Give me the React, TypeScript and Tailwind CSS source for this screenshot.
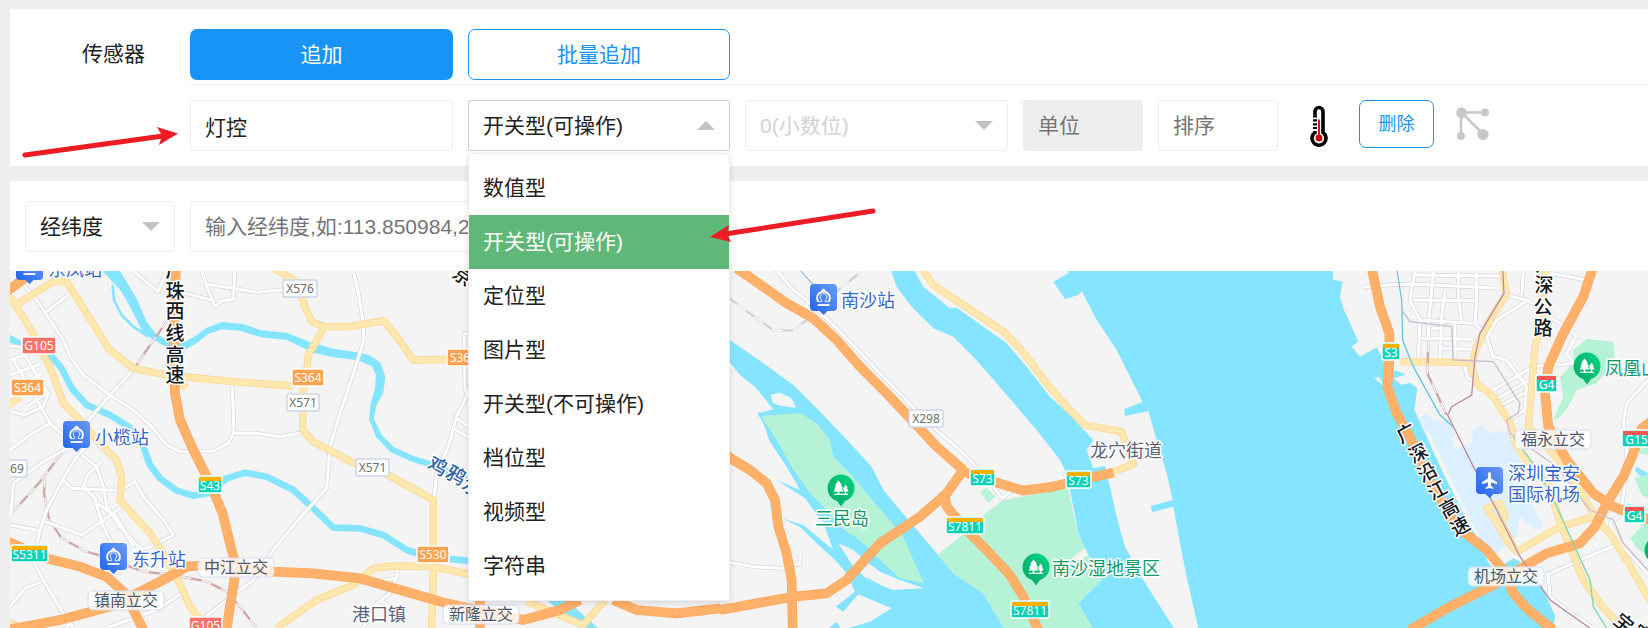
import React from "react";

const sensorTypes = [
  "数值型",
  "开关型(可操作)",
  "定位型",
  "图片型",
  "开关型(不可操作)",
  "档位型",
  "视频型",
  "字符串",
];

const field = "h-[51px] rounded-[3px] border border-[#eeeeee] bg-white px-[14px] text-[21px]";

/* ---------- form pieces ---------- */

function Caret({ up = false }: { up?: boolean }) {
  return (
    <svg
      className="pointer-events-none absolute top-1/2 right-[15px] -mt-[5px] h-[9px] w-[18px]"
      viewBox="0 0 18 9"
      aria-hidden="true"
    >
      <path d={up ? "M0 9 9 0 18 9Z" : "M0 0 9 9 18 0Z"} fill="#c2c2c2" />
    </svg>
  );
}

function Thermometer() {
  return (
    <svg viewBox="0 0 18 42" className="h-[42px] w-[18px]" aria-hidden="true">
      <path
        d="M5 27.5V6.5a4 4 0 0 1 8 0v21a7 7 0 1 1-8 0Z"
        fill="#fff"
        stroke="#000"
        strokeWidth="3.6"
      />
      <path d="M2 10h5v16H2Z" fill="#fff" />
      <path d="M3 11.3h4M3 15.3h4M3 19.3h4M3 23h4" stroke="#000" strokeWidth="2.2" />
      <path d="M9 14.5v17" stroke="#c80000" strokeWidth="1.8" />
      <circle cx="9" cy="33" r="3.4" fill="#c80000" />
    </svg>
  );
}

function NodesIcon() {
  return (
    <svg viewBox="0 0 34 34" className="size-[34px]" aria-hidden="true">
      <path d="M5.5 5.5H29M5 5.5V29M5.500 5.500 27 27" stroke="#c8c8c8" strokeWidth="2.5" />
      <g fill="#c8c8c8">
        <circle cx="5.5" cy="5.5" r="5.3" />
        <circle cx="29" cy="5.5" r="4" />
        <circle cx="5" cy="29" r="4" />
        <circle cx="27" cy="27.5" r="5.6" />
      </g>
    </svg>
  );
}

/* ---------- map pieces ---------- */

type Style = { color: string; edge: string; width: number };
const minor: Style = { color: "#ffffff", edge: "#d3d5dd", width: 9 };
const main: Style = { color: "#ffe8b0", edge: "#ffd48c", width: 18 };
const highway: Style = { color: "#ffb069", edge: "#ffa860", width: 25 };

function Roads({ lines, look }: { lines: string[]; look: Style }) {
  return (
    <g fill="none" strokeLinejoin="round">
      {lines.map((p) => (
        <polyline key={"e" + p} points={p} stroke={look.edge} strokeWidth={look.width + 4} />
      ))}
      {lines.map((p) => (
        <polyline key={p} points={p} stroke={look.color} strokeWidth={look.width} />
      ))}
    </g>
  );
}

function Rail({ points, color = "#cfa6a8" }: { points: string; color?: string }) {
  return (
    <g fill="none" strokeLinejoin="round">
      <polyline points={points} stroke={color} strokeWidth="7" />
      <polyline points={points} stroke="#fff" strokeWidth="4" strokeDasharray="32 32" />
    </g>
  );
}

const westMinor = [
  "70,72 110,120 140,165 190,240 210,290 250,345 330,405 400,450 450,495 500,555 540,575 640,573 685,550 700,520 770,520 840,530 905,518",
  "697,380 702,520",
  "1060,33 1075,100 1090,190 1092,240 1060,340 1020,460 990,560 980,685 890,785 820,870 760,960 700,1005 610,1075",
  "400,33 475,95 497,40",
  "605,33 625,90 645,140 665,122 700,118 705,33",
  "615,72 700,85 770,97 850,90",
  "550,98 640,122",
  "140,155 205,105",
  "408,320 330,405 262,485",
  "30,258 75,262",
  "30,300 75,285 110,345 145,400 130,440 75,465 35,455",
  "40,300 100,400 150,490 195,530",
  "30,345 120,312",
  "45,385 125,340",
  "80,440 140,400",
  "30,570 90,525 150,490",
  "40,670 130,605 210,560",
  "40,670 35,740 30,770",
  "270,545 230,590 190,655 140,750 120,810 112,850",
  "245,585 290,620 310,680 320,740 360,800 420,865",
  "290,720 250,680 262,645 305,605",
  "190,660 215,685 310,690 360,690 405,665 430,710 490,780 520,825 440,865 395,870",
  "285,720 310,800 335,850",
  "135,785 245,825 360,745",
  "30,795 120,812",
  "290,730 350,770 400,860",
  "100,905 130,960 170,1030 200,1075 220,1104",
  "30,1040 75,985 125,965",
  "330,1100 470,1050 545,1000",
  "1420,220 1392,222 1395,390 1404,400 1370,470 1345,560 1310,640 1302,715",
  "1370,475 1420,510",
  "1360,505 1420,540",
  "1080,970 1190,955 1192,930",
  "1190,950 1170,1000 1130,1030 1115,1060 1090,1104",
  "1140,1020 1200,1060",
  "170,1060 210,1075 200,1104",
];
const westMain = [
  "40,140 160,65 200,65 235,120 285,200 325,265 400,325 500,345 700,365 880,378",
  "30,110 75,180 110,240 160,345 190,430 240,480 300,550 350,600 365,650 360,720 400,765 450,820 490,880 530,950 570,1040 600,1080",
  "820,25 890,65 915,140 935,185 970,200 1050,200 1150,182 1190,230 1240,300 1420,297",
  "970,205 925,285 920,330 908,400 908,510 940,545 1060,608 1165,645 1300,720 1300,930 1295,1104",
  "830,1104 950,1020 1060,975 1120,925 1180,918 1300,920 1440,950",
  "20,440 60,410",
  "20,1080 60,1104",
  "1580,1025 1750,1095 1815,1020",
  "535,360 560,385",
];
const westHighway = [
  "528,25 525,100 522,200 522,330 525,400 540,480 580,570 630,670 668,760 690,850 708,920 700,980 690,1040 680,1110",
  "20,843 140,895 240,920 320,950 375,1000 430,1110",
  "20,1110 180,1080 330,1040 400,1005 480,965 560,920 620,915 820,935 940,940 1080,955 1200,990 1340,1030 1570,1080 1680,1050 1740,1020",
  "20,95 80,50",
  "1440,1020 1440,1110",
  "1840,1020 1910,1050 2030,1060 2160,1045",
];

const centerMinor = [
  "165,25 215,85 265,125 320,175 400,255 470,330 540,400 600,465 660,520 720,570 770,622",
  "820,680 845,715 900,675",
  "265,125 255,150",
  "20,905 100,920 180,925 240,910 240,885",
];
const centerMain = [
  "605,25 640,75 700,115 760,155 850,215 900,265 980,370 1040,440 1095,495 1205,515 1240,612 1175,638",
];
const centerHighway = [
  "50,25 130,80 200,130 280,175 350,240 420,320 500,400 580,485 650,560 730,630",
  "730,630 680,700 600,770 480,850 380,960 320,1000 220,1010 0,1050",
  "730,635 820,665 910,692 1000,680 1100,655 1180,638",
  "672,700 680,740 740,810 800,870 870,945 910,1010 955,1110",
  "0,570 40,600 90,630 140,670 165,720 175,800 200,880 215,960 218,1110",
];

const eastMinor = [
  "550,82 620,75 700,72 960,85",
  "705,33 690,120 720,180 715,295",
  "760,33 755,90 745,200 745,240",
  "835,33 835,110 845,190",
  "700,45 960,48",
  "700,120 890,122",
  "715,180 880,190",
  "890,40 890,120 885,190 920,230 940,290 980,300",
  "715,235 880,238",
  "795,90 785,170 780,295",
  "825,190 825,295",
  "780,265 880,268",
  "755,205 780,205",
  "980,300 1040,380 1035,460",
  "930,395 1060,320 1130,310",
  "945,420 1040,365",
  "965,435 1050,390",
  "1045,120 950,180 920,230",
  "960,100 1045,122 1110,170 1190,225 1160,280 1180,310 1130,315",
  "1030,33 1025,110",
  "1110,40 1220,60",
  "855,315 860,350 890,370",
  "1100,945 1200,900 1320,850 1420,960",
  "1320,850 1290,790 1320,765",
  "1105,945 1110,1010 1160,1050 1240,1104",
  "1420,350 1395,370 1340,430 1330,490 1340,560 1340,640 1325,740",
  "985,480 1035,450",
];
const eastMain = [
  "965,25 980,100 930,180 890,260 875,320 890,370 940,410 990,490 1010,560 1040,600 1110,680 1140,790 1170,860 1210,960 1260,1030 1330,1110",
  "660,305 870,308",
  "1095,25 1090,180 1065,260 1055,380 1045,500 1100,560 1170,640 1240,760",
  "1240,770 1140,800 1010,875 980,840 940,770 920,745 960,730 975,770 960,780 1005,870",
  "1240,770 1290,820 1340,900 1420,1040",
];
const eastHighway = [
  "575,25 600,140 628,220 628,300 622,380 650,460 700,550 760,680 830,800 920,870 970,930 1000,1000 1040,1045 1120,1110",
  "690,1110 800,1045 940,975 1040,915 1100,880 1200,850 1245,800 1280,730 1330,650 1360,580 1385,505 1420,480",
  "1238,25 1210,110 1150,220 1105,320 1095,400 1105,500 1160,600 1240,700 1300,740 1420,785",
];

type ShieldKind = "province" | "nation" | "S" | "G" | "X";
const shieldFill: Record<ShieldKind, string> = {
  province: "#0bd3b8",
  nation: "#0bd3b8",
  S: "#ffa24f",
  G: "#ff7168",
  X: "#ffffff",
};

function Shield({ x, y, w, kind, text }: { x: number; y: number; w: number; kind: ShieldKind; text: string }) {
  const strip = kind === "province" ? "#ffb000" : kind === "nation" ? "#ff5555" : null;
  return (
    <g>
      <rect
        x={x}
        y={y}
        width={w}
        height={17}
        rx={2}
        fill={shieldFill[kind]}
        stroke={kind === "X" ? "#cdd5e6" : "#fff"}
        strokeWidth="1.5"
      />
      {strip && <rect x={x + 1} y={y + 1} width={w - 2} height={4} fill={strip} />}
      <text
        x={x + w / 2}
        y={y + (strip ? 14 : 13)}
        textAnchor="middle"
        fontSize="12"
        fill={kind === "X" ? "#6e6e6e" : "#fff"}
      >
        {text}
      </text>
    </g>
  );
}

function Junction({ x, y, text }: { x: number; y: number; text: string }) {
  return (
    <g>
      <rect x={x} y={y} width={76} height={19} rx={5} fill="#fff" fillOpacity="0.8" stroke="#d5dcec" />
      <text x={x + 38} y={y + 15} textAnchor="middle" fontSize="16" fill="#4c566e">
        {text}
      </text>
    </g>
  );
}

function Name({ x, y, text, fill }: { x: number; y: number; text: string; fill: string }) {
  return (
    <text x={x} y={y} fontSize="18" fill={fill} stroke="#fff" strokeWidth="3" strokeLinejoin="round" paintOrder="stroke">
      {text}
    </text>
  );
}

function RoadName({ chars, angle = 0, fill = "#15181d" }: { chars: [string, number, number][]; angle?: number; fill?: string }) {
  return (
    <g fontSize="19" fontWeight="500" fill={fill} stroke="#fff" strokeWidth="3" strokeLinejoin="round" paintOrder="stroke" textAnchor="middle">
      {chars.map(([c, x, y]) => (
        <text key={c + y} transform={`translate(${x} ${y}) rotate(${angle})`} y={7}>
          {c}
        </text>
      ))}
    </g>
  );
}

function BluePin({ x, y, plane = false }: { x: number; y: number; plane?: boolean }) {
  return (
    <g transform={`translate(${x} ${y})`}>
      <path
        d="M4 0h19a4 4 0 0 1 4 4v19a4 4 0 0 1-4 4h-5.5L13.5 31 9.5 27H4a4 4 0 0 1-4-4V4a4 4 0 0 1 4-4Z"
        fill="url(#pinBlue)"
      />
      {plane ? (
        <path
          d="M13.500 5c1 0 1.500 1.500 1.500 3v3.200l6 4v2l-6-2v3.600l2.300 1.900v1.300l-3.800-1-3.800 1v-1.300l2.300-1.900v-3.600l-6 2v-2l6-4V8c0-1.500.5-3 1.500-3Z"
          fill="#fff"
        />
      ) : (
        <g fill="none" stroke="#fff">
          <path d="M8.300 17.600A6.300 6.300 0 1 1 18.700 17.600" strokeWidth="2" />
          <path d="M8.500 17.600h3.300c.3-1.200-.6-2-1-2.800a3.200 3.200 0 1 1 5.400 0c-.4.8-1.300 1.600-1 2.800h3.300" strokeWidth="1.100" strokeOpacity="0.700" />
          <path d="M7.500 21h12" strokeWidth="1.800" />
          <path d="M11.500 6.800 13.500 4.800 15.500 6.800Z" fill="#fff" strokeWidth="1" />
        </g>
      )}
    </g>
  );
}

function ParkPin({ x, y }: { x: number; y: number }) {
  return (
    <g transform={`translate(${x} ${y})`}>
      <path d="M0 18.500-4 13A13.500 13.500 0 1 1 4 13Z" fill="url(#pinGreen)" />
      <path d="M-2.500-7.500 1-3H0l2 3.500H.8L2.500 3.500H-1.700V6h-1.600V3.500h-4.200L-5.500.5h-1.300L-4.800-3h-1.100Z" fill="#fff" />
      <path d="M4.500-3.500 6.800 0H6l1.500 3.500H5.200V6H3.800V3.500H3L2.200.5Z" fill="#fff" />
      <path d="M-7 6.300H7" stroke="#fff" strokeWidth="1.200" />
    </g>
  );
}

function MapView() {
  const blue = "#3467cf";
  const green = "#0a9c68";
  return (
    <svg
      className="absolute inset-0 size-full"
      viewBox="10 271 1638 357"
      preserveAspectRatio="xMinYMin slice"
      fontFamily="'Noto Sans','Noto Sans CJK SC',sans-serif"
      role="img"
      aria-label="地图"
    >
      <defs>
        <linearGradient id="pinBlue" x1="1" y1="0" x2="0" y2="1">
          <stop offset="0" stopColor="#6a9bf8" />
          <stop offset="1" stopColor="#1d62ee" />
        </linearGradient>
        <linearGradient id="pinGreen" x1="1" y1="0" x2="0" y2="1">
          <stop offset="0" stopColor="#00d680" />
          <stop offset="1" stopColor="#0aa565" />
        </linearGradient>
      </defs>
      <rect x="10" y="271" width="1638" height="357" fill="#f4f4f4" />

      {/* rivers and the bay */}
      <g transform="translate(0 260) scale(.33333)">
        <path d="M300 25H355L380 65 412 120 440 185 465 218 500 240 555 245 580 232 620 203 665 186 730 192 780 210 860 218 930 246 1000 266 1070 277 1110 286 1142 308 1156 350 1150 400 1130 435 1121 475 1145 525 1180 560 1240 588 1300 605 1430 660V680L1300 625 1235 605 1170 575 1128 530 1107 478 1112 430 1125 385 1128 345 1115 318 1070 300 1000 292 940 278 860 240 780 232 720 212 665 208 625 222 590 250 550 272 500 262 455 236 425 210 400 160 365 95Z" fill="#85e4ff" />
        <path d="M725 222 780 233" stroke="#f4f4f4" strokeWidth="6" />
        <path d="M338 75 342 120 365 165 400 200 445 230" fill="none" stroke="#85e4ff" strokeWidth="8" />
        <polyline points="20,230 60,252 150,285 185,325 215,385 260,435 330,465 385,500 430,560 450,615 480,655 530,692 580,707 625,700 680,655 735,638 800,650 880,690 940,745 1000,803 1080,805 1150,825 1220,870 1280,890 1430,905" fill="none" stroke="#85e4ff" strokeWidth="20" strokeLinejoin="round" />
        <path d="M1640 1020H1700L1800 1110H1750Z" fill="#85e4ff" />
      </g>
      <g transform="translate(720 260) scale(.33333)">
        <path d="M510 25 530 80 575 140 640 205 700 230 760 290 830 370 890 440 950 510 1020 600 1040 640 1050 690 1075 820 1095 865 1145 960 1075 1030 1120 1110H2530V25Z" fill="#85e4ff" />
        <path d="M0 220 30 240 130 310 220 375 310 465 400 560 455 620 490 690 565 780 655 885 700 940 790 1000 855 1110H320L350 1085 365 1110 450 1085 515 1045 415 1003 370 1055 347 1040 405 995 380 940 345 900 290 850 240 800 185 775 250 795 340 870 310 790 255 715 170 660 240 690 200 620 150 545 130 490 112 460 160 448 105 380 60 345 0 270Z" fill="#85e4ff" />
        <path d="M125 467 240 460 290 490 330 540 340 590 390 640 440 700 500 770 550 830 580 900 612 970 540 955 480 900 430 850 360 800 310 740 270 700 215 620 170 540 130 480Z" fill="#b6f2d6" />
        <path d="M152 405 180 398 215 415 228 443 180 437 158 428ZM355 850 400 870 440 905 480 935 540 960 612 985 520 990 450 965 400 920Z" fill="#f4f4f4" />
        <path d="M395 825 420 850 450 870 475 902" fill="none" stroke="#85e4ff" strokeWidth="7" />
        <path d="M440 955 495 985" fill="none" stroke="#85e4ff" strokeWidth="5" />
        <path d="M652 885 720 830 790 765 850 720 1045 685 1060 760 1075 820 1095 865 1055 895 1080 903 1105 885 1145 960 1075 1030 1120 1110H855L790 1000 700 940ZM780 695 800 683 825 710 805 730Z" fill="#b6f2d6" />
        <path d="M580 25 610 80 690 145 710 143 755 175 860 250 920 320 990 410 1050 465 1120 540 1100 570 1120 625 1155 618 1170 680 1190 770 1215 860 1270 960 1365 1110H1436L1400 950 1380 850 1360 740 1297 756 1292 738 1358 720 1340 640 1310 540 1285 453 1215 468 1212 448 1268 426 1230 350 1190 270 1130 180 1085 93 1075 105 1035 117 1000 65 1045 40V25Z" fill="#f4f4f4" />
      </g>
      <g transform="translate(1180 260) scale(.33333)">
        <path d="M459 25V60L488 65 480 110 492 150 515 200 535 245 515 260 540 290 590 262 610 300 640 335 675 345 640 355 665 375 690 368 712 385 703 450 735 520 790 640 850 760 890 830 940 850 920 900 950 940 1075 960 1125 1065 1120 1110H1420V25Z" fill="#f4f4f4" />
        <path d="M459 62H470L474 120 480 172 468 140ZM975 910 1000 895 1020 905 1010 930 980 930ZM640 330 675 342 640 352ZM1370 620 1404 640 1395 660 1365 632Z" fill="#85e4ff" />
        <path d="M583 355 597 350 612 378Z" fill="#f4f4f4" />
        <path d="M720 470 740 462 765 485 800 480 820 500V570L880 545 875 510 910 495 930 520 985 510 1000 560 1030 620 1060 740 1090 800 1065 810 1020 770 1010 830 940 890 915 850 890 820 850 740 790 610 720 490Z" fill="#dcf0ff" />
        <path d="M738 510 885 815" stroke="#f4f4f4" strokeWidth="9" />
        <path d="M1180 270 1220 237 1300 245 1305 300 1250 370 1190 390 1165 440 1135 475 1120 480 1150 410 1140 350 1180 310ZM1370 570 1420 555V585L1380 582ZM1365 655 1420 640V720L1385 705ZM1340 730 1385 740 1420 780V890L1375 870 1350 835 1385 800Z" fill="#b6f2d6" />
      </g>

      {/* roads */}
      <g transform="translate(0 260) scale(.33333)">
        <Rail points="505,178 440,270 405,322" />
        <Rail points="40,755 120,665 185,580" />
        <Rail points="135,650 132,700 148,780 185,835 260,875 310,890 430,935 520,945 620,965 680,995 720,1040 770,1104" />
        <Roads lines={westMinor} look={minor} />
        <Roads lines={westMain} look={main} />
        <Roads lines={westHighway} look={highway} />
      </g>
      <g transform="translate(720 260) scale(.33333)">
        <Rail points="0,95 110,175 160,210 220,212 260,180 355,90 430,30" color="#cfd2da" />
        <path d="M235 25 280 75" stroke="#5b9be0" strokeWidth="3" />
        <Roads lines={centerMinor} look={minor} />
        <Roads lines={centerMain} look={main} />
        <Roads lines={centerHighway} look={highway} />
      </g>
      <g transform="translate(1180 260) scale(.33333)">
        <Roads lines={eastMinor} look={minor} />
        <Roads lines={eastMain} look={main} />
        <Roads lines={eastHighway} look={highway} />
        <Rail points="745,245 742,340 800,465" />
        <g fill="none" strokeWidth="4">
          <polyline points="650,25 665,120 668,240 700,320 780,465 820,500" stroke="#62c9de" />
          <polyline points="968,25 972,100 900,220 885,290 875,405 815,440 803,465 880,620 940,730 1020,890 1110,1020 1230,1104" stroke="#b98aa9" />
          <polyline points="665,150 690,185 815,200 820,300 940,305 1020,430 1015,460 980,480 990,520 1130,620 1230,750 1300,780 1330,850 1404,930" stroke="#cdbccf" />
          <polyline points="1000,530 1080,640 1130,740 1230,960 1240,1040 1280,1104" stroke="#7fd9a6" />
        </g>
      </g>

      {/* road numbers */}
      <Shield x={22} y={337} w={34} kind="G" text="G105" />
      <Shield x={11} y={379} w={33} kind="S" text="S364" />
      <Shield x={-7} y={460} w={34} kind="X" text="X269" />
      <Shield x={198} y={476} w={24} kind="province" text="S43" />
      <Shield x={11} y={545} w={37} kind="province" text="S5311" />
      <Shield x={189} y={617} w={33} kind="G" text="G105" />
      <Shield x={283} y={280} w={34} kind="X" text="X576" />
      <Shield x={292} y={369} w={32} kind="S" text="S364" />
      <Shield x={287} y={394} w={32} kind="X" text="X571" />
      <Shield x={356} y={459} w={33} kind="X" text="X571" />
      <Shield x={447} y={349} w={33} kind="S" text="S364" />
      <Shield x={417} y={546} w={32} kind="S" text="S530" />
      <Shield x={909} y={410} w={34} kind="X" text="X298" />
      <Shield x={970} y={469} w={25} kind="province" text="S73" />
      <Shield x={1066} y={471} w={25} kind="province" text="S73" />
      <Shield x={946} y={517} w={38} kind="province" text="S7811" />
      <Shield x={1011} y={601} w={38} kind="province" text="S7811" />
      <Shield x={1382} y={343} w={18} kind="province" text="S3" />
      <Shield x={1536} y={375} w={21} kind="nation" text="G4" />
      <Shield x={1622} y={430} w={29} kind="nation" text="G15" />
      <Shield x={1624} y={506} w={21} kind="nation" text="G4" />

      {/* junctions */}
      <Junction x={198} y={558} text="中江立交" />
      <Junction x={88} y={591} text="镇南立交" />
      <Junction x={443} y={605} text="新隆立交" />
      <Junction x={1515} y={430} text="福永立交" />
      <Junction x={1468} y={567} text="机场立交" />

      {/* road and river names */}
      <RoadName chars={[["广", 175, 270], ["珠", 175, 291], ["西", 175, 311], ["线", 175, 333], ["高", 175, 355], ["速", 175, 375]]} />
      <RoadName chars={[["广", 1545, 264], ["深", 1544, 285], ["公", 1543, 307], ["路", 1543, 328]]} />
      <RoadName angle={-28} chars={[["广", 1406, 433], ["深", 1418, 453], ["沿", 1427, 472], ["江", 1437, 490], ["高", 1449, 508], ["速", 1460, 526]]} />
      <RoadName angle={35} chars={[["京", 463, 276]]} />
      <RoadName angle={40} chars={[["宝", 1624, 623], ["安", 1642, 634]]} />
      <RoadName angle={28} fill="#2a62ab" chars={[["鸡", 438, 466], ["鸦", 456, 475], ["水", 472, 487]]} />

      {/* places */}
      <BluePin x={16} y={253} />
      <Name x={48} y={276} text="东凤站" fill={blue} />
      <BluePin x={63} y={421} />
      <Name x={95} y={444} text="小榄站" fill={blue} />
      <BluePin x={100} y={543} />
      <Name x={132} y={566} text="东升站" fill={blue} />
      <BluePin x={810} y={284} />
      <Name x={841} y={307} text="南沙站" fill={blue} />
      <BluePin x={1476} y={467} plane />
      <Name x={1508} y={480} text="深圳宝安" fill={blue} />
      <Name x={1508} y={501} text="国际机场" fill={blue} />
      <Name x={352} y={621} text="港口镇" fill="#5a6378" />
      <Name x={1090} y={457} text="龙穴街道" fill="#5a6378" />
      <ParkPin x={841} y={488} />
      <Name x={815} y={525} text="三民岛" fill={green} />
      <ParkPin x={1036} y={567} />
      <Name x={1052} y={575} text="南沙湿地景区" fill={green} />
      <ParkPin x={1587} y={366} />
      <Name x={1605} y={375} text="凤凰山" fill={green} />
      <ParkPin x={1658} y={550} />
    </svg>
  );
}

/* ---------- page ---------- */

export default function App() {
  return (
    <div
      className="relative flex min-h-screen flex-col gap-[15px] overflow-hidden bg-[#eeeeee] pt-[9px] pl-[10px] font-['Liberation_Sans','Noto_Sans_CJK_SC',sans-serif] text-[21px] text-[#222222]"
    >
      <section className="flex bg-white pb-[15px]">
        <div className="w-[180px] shrink-0 pt-[20px] pr-[45px] text-right leading-[50px]">传感器</div>
        <div className="min-w-0 flex-1">
          <div className="flex gap-[15px] border-b border-[#eeeeee] pt-[20px] pb-[4px]">
            <button type="button" className="h-[51px] w-[263px] rounded-[7px] bg-[#1794f5] text-white">
              追加
            </button>
            <button type="button" className="h-[51px] w-[262px] rounded-[7px] border border-[#1794f5] bg-white text-[#1794f5]">
              批量追加
            </button>
          </div>
          <div className="flex flex-wrap gap-[15px] pt-[15px]">
            <input aria-label="传感器名称" defaultValue="灯控" className={field + " w-[263px]"} />
            <div className="relative w-[262px]">
              <select
                aria-label="传感器类型"
                defaultValue="开关型(可操作)"
                className="h-[51px] w-full appearance-none rounded-[3px] border border-[#cccccc] bg-white px-[14px] text-[21px]"
              >
                {sensorTypes.map((t) => (
                  <option key={t}>{t}</option>
                ))}
              </select>
              <Caret up />
              <ul
                role="listbox"
                aria-label="传感器类型"
                className="absolute top-[53px] left-0 z-10 w-full rounded-[3px] border border-[#eeeeee] bg-white py-[7px] shadow-[0_2px_6px_rgba(0,0,0,0.12)]"
              >
                {sensorTypes.map((t, i) => (
                  <li
                    key={t}
                    role="option"
                    aria-selected={i === 1}
                    className={"h-[54px] px-[14px] leading-[54px] " + (i === 1 ? "bg-[#5fb878] text-white" : "")}
                  >
                    {t}
                  </li>
                ))}
              </ul>
            </div>
            <div className="relative w-[263px]">
              <select
                aria-label="小数位"
                disabled
                className="h-[51px] w-full appearance-none rounded-[3px] border border-[#eeeeee] bg-white px-[14px] text-[21px] text-[#d2d2d2] opacity-100"
              >
                <option>0(小数位)</option>
              </select>
              <Caret />
            </div>
            <input
              aria-label="单位"
              placeholder="单位"
              disabled
              className="h-[51px] w-[120px] rounded-[3px] border border-[#eeeeee] bg-[#eeeeee] px-[14px] text-[21px] placeholder:text-[#757575]"
            />
            <input
              aria-label="排序"
              placeholder="排序"
              className={field + " w-[120px] placeholder:text-[#757575]"}
            />
            <button type="button" aria-label="图标" className="grid h-[51px] w-[51px] place-items-center">
              <Thermometer />
            </button>
            <button
              type="button"
              className="h-[48px] w-[75px] rounded-[7px] border border-[#1794f5] bg-white text-[18px] text-[#1794f5]"
            >
              删除
            </button>
            <button type="button" aria-label="关联" className="grid h-[48px] w-[48px] place-items-center">
              <NodesIcon />
            </button>
          </div>
        </div>
      </section>

      <section className="flex flex-1 flex-col bg-white">
        <div className="flex gap-[15px] px-[15px] pt-[20px] pb-[19px]">
          <div className="relative w-[150px]">
            <select
              aria-label="定位方式"
              className="h-[51px] w-full appearance-none rounded-[3px] border border-[#eeeeee] bg-white px-[14px] text-[21px]"
            >
              <option>经纬度</option>
            </select>
            <Caret />
          </div>
          <input
            aria-label="经纬度"
            placeholder="输入经纬度,如:113.850984,22"
            className={field + " w-[420px] placeholder:text-[#757575]"}
          />
        </div>
        <div className="relative min-h-[320px] flex-1 overflow-hidden">
          <MapView />
        </div>
      </section>

      <svg
        className="pointer-events-none absolute top-0 left-0 z-20 h-[260px] w-[900px]"
        viewBox="0 0 900 260"
        aria-hidden="true"
      >
        <g stroke="#ed1c24" strokeWidth="5" strokeLinecap="round">
          <path d="M25 155 163 136" />
          <path d="M873 211 725 234" />
        </g>
        <path d="M178 133.500 157 127 162 135.500 159 145ZM710 237 729 225 727 234 731 242Z" fill="#ed1c24" />
      </svg>
    </div>
  );
}
